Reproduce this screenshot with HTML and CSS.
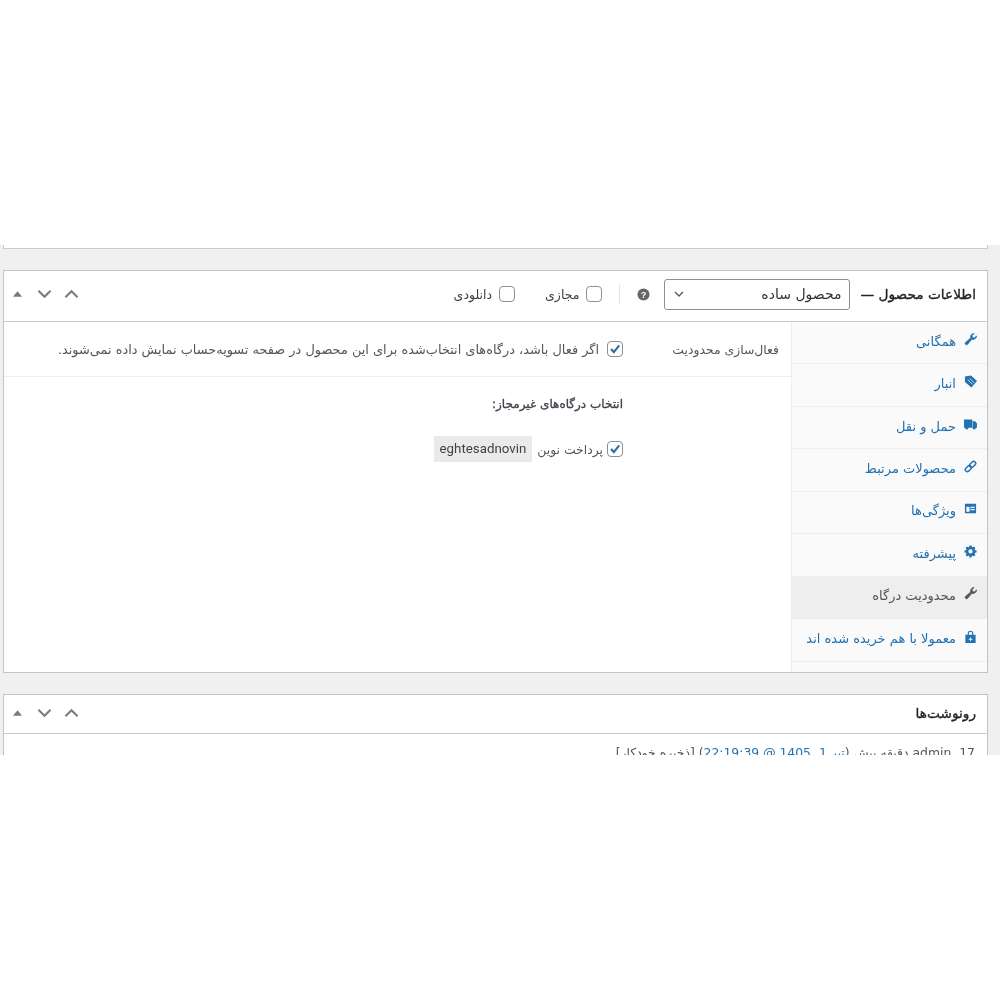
FILE: index.html
```html
<!DOCTYPE html>
<html lang="fa" dir="rtl">
<head>
<meta charset="utf-8">
<title>اطلاعات محصول</title>
<link rel="stylesheet" href="styles.css">
</head>
<body>
<main class="screen">
  <div class="prev-box"></div>

  <section class="postbox product">
    <header class="box-head tall">
      <h2 class="box-title">اطلاعات محصول —</h2>
      <div class="fake-select">
        <span>محصول ساده</span>
        <svg class="caret" viewBox="0 0 10 6"><path d="M1 1l4 4 4-4" fill="none" stroke="#50575e" stroke-width="1.3"/></svg>
      </div>
      <svg class="help" viewBox="0 0 14 14"><circle cx="7" cy="7" r="6.5" fill="#666"/><text x="7" y="10.6" text-anchor="middle" class="help-q">?</text></svg>
      <span class="sep"></span>
      <label class="type-check first"><span class="cb"></span>مجازی</label>
      <label class="type-check"><span class="cb"></span>دانلودی</label>
      <div class="handles">
        <svg viewBox="0 0 16 10"><path d="M1.5 8.5L8 2l6.500 6.500" fill="none" stroke="#787c82" stroke-width="2.200"/></svg>
        <svg viewBox="0 0 16 10"><path d="M1.500 1.500L8 8l6.500-6.500" fill="none" stroke="#787c82" stroke-width="2.200"/></svg>
        <svg class="small" viewBox="0 0 12 8"><path d="M6 1l5 6H1z" fill="#787c82"/></svg>
      </div>
    </header>
    <div class="product-body">
      <nav class="tabs">
        <a class="tab"><svg viewBox="0 0 14 14"><path class="solid" d="M13.500 3.200a3.700 3.700 0 0 1-5 3.500L3.700 12.300a1.500 1.500 0 0 1-2.200-2L7.200 5.400A3.700 3.700 0 0 1 10.800.6L8.700 2.800l.4 2.100 2.100.4z"/></svg>همگانی</a>
        <a class="tab"><svg viewBox="0 0 14 14"><path d="M7.500 0.500L14 6.500 8 13.500 1 7.500V1.500z"/><path d="M4 5l5 5M6 3.500l5 5" stroke="#fafafa" stroke-width=".8"/></svg>انبار</a>
        <a class="tab"><svg viewBox="0 0 14 14"><path d="M0 1.500h9v9H0zM9.500 3.500h2.600L14 6v4.500H9.500z"/><circle cx="3" cy="10.500" r="1.800"/><circle cx="11" cy="10.500" r="1.800"/></svg>حمل و نقل</a>
        <a class="tab"><svg viewBox="0 0 14 14"><g fill="none" stroke="#2271b1" stroke-width="1.600" transform="rotate(-45 7 7)"><rect x="0" y="4.800" width="7.500" height="4.400" rx="2.200"/><rect x="6.500" y="4.800" width="7.500" height="4.400" rx="2.200"/></g></svg>محصولات مرتبط</a>
        <a class="tab"><svg viewBox="0 0 14 14"><path fill-rule="evenodd" d="M1 2h12v10H1zM2.500 5v5.500H6V5zM7 5v1.500h4.500V5zM7 7.500V9h4.500V7.500z"/></svg>ویژگی‌ها</a>
        <a class="tab"><svg viewBox="0 0 14 14"><path fill-rule="evenodd" d="M5.800 1h2.400l.3 1.700 1.100.5L11 2.200 12.700 4l-1 1.400.5 1.100 1.800.3v2.400l-1.800.3-.5 1.100 1 1.400L11 13.800l-1.400-1-1.100.5-.3 1.700H5.800l-.3-1.700-1.100-.5-1.400 1L1.300 12l1-1.400-.5-1.100L0 9.200V6.800l1.800-.3.500-1.100-1-1.400L3 2.200l1.400 1 1.100-.5zM7 5.500a2.500 2.500 0 1 0 0 5 2.500 2.500 0 0 0 0-5z" transform="translate(0.500 -0.500) scale(.93)"/></svg>پیشرفته</a>
        <a class="tab active"><svg viewBox="0 0 14 14"><path class="solid" d="M13.500 3.200a3.700 3.700 0 0 1-5 3.500L3.700 12.300a1.500 1.500 0 0 1-2.200-2L7.200 5.400A3.700 3.700 0 0 1 10.800.6L8.700 2.800l.4 2.100 2.100.4z"/></svg>محدودیت درگاه</a>
        <a class="tab"><svg viewBox="0 0 14 14"><path fill-rule="evenodd" d="M1.500 5H4V3.800a3 3 0 0 1 6 0V5h2.500v9h-11zM5.200 5h3.600V3.800a1.800 1.800 0 0 0-3.600 0z"/><path d="M7 8v4M5 10h4" stroke="#fafafa" stroke-width="1"/></svg>معمولا با هم خریده شده اند</a>
      </nav>
      <div class="panel">
        <div class="opt-row">
          <span class="opt-label">فعال‌سازی محدودیت</span>
          <span class="cb checked"><svg viewBox="0 0 16 16"><path d="M3.500 8l3.200 3.500L12.800 3.800" fill="none" stroke="#2f6f9f" stroke-width="2.400"/></svg></span>
          <span class="opt-desc">اگر فعال باشد، درگاه‌های انتخاب‌شده برای این محصول در صفحه تسویه‌حساب نمایش داده نمی‌شوند.</span>
        </div>
        <div class="gateways">
          <h3 class="gw-title">انتخاب درگاه‌های غیرمجاز:</h3>
          <div class="gw-row">
            <span class="cb checked"><svg viewBox="0 0 16 16"><path d="M3.500 8l3.200 3.500L12.800 3.800" fill="none" stroke="#2f6f9f" stroke-width="2.400"/></svg></span>
            <span class="gw-name">پرداخت نوین</span>
            <code class="gw-code">eghtesadnovin</code>
          </div>
        </div>
      </div>
    </div>
  </section>

  <section class="postbox revisions">
    <header class="box-head short">
      <h2 class="box-title">رونوشت‌ها</h2>
      <div class="handles">
        <svg viewBox="0 0 16 10"><path d="M1.500 8.500L8 2l6.500 6.500" fill="none" stroke="#787c82" stroke-width="2.200"/></svg>
        <svg viewBox="0 0 16 10"><path d="M1.500 1.500L8 8l6.500-6.500" fill="none" stroke="#787c82" stroke-width="2.200"/></svg>
        <svg class="small" viewBox="0 0 12 8"><path d="M6 1l5 6H1z" fill="#787c82"/></svg>
      </div>
    </header>
    <p class="rev-line">17 ,admin دقیقه پیش (<a>تیر 1, 1405 @ 22:19:39</a>) [ذخیره خودکار]</p>
  </section>
</main>
</body>
</html>
```
FILE: styles.css
```css
* { box-sizing: border-box; }
html, body { margin: 0; padding: 0; background: #fff; }
body { font-family: "DejaVu Sans", "Noto Sans", sans-serif; font-size: 12px; color: #50575e; }

.screen {
  margin-top: 245px;
  height: 510px;
  overflow: hidden;
  background: #f0f0f1;
  padding: 0 12px 0 3px;
  filter: blur(0.3px);
}
.prev-box {
  height: 4px;
  background: #fff;
  border: 1px solid #c9cbce;
  border-top: 0;
}
.postbox {
  background: #fff;
  border: 1px solid #c3c4c7;
}
.product { margin-top: 21px; height: 403px; display: flex; flex-direction: column; }
.revisions { margin-top: 21px; }

.box-head {
  display: flex;
  align-items: center;
  border-bottom: 1px solid #c9cbce;
  padding: 0 11px 4px 8px;
}
.box-head.tall { height: 51px; flex: none; }
.box-head.short { height: 39px; padding-bottom: 3px; }
.box-title {
  margin: 0;
  font-size: 13.700px;
  font-weight: 400;
  -webkit-text-stroke: 0.35px #1d2327;
  color: #1d2327;
  white-space: nowrap;
}

.fake-select {
  width: 186px;
  height: 31px;
  margin-right: 10px;
  padding: 0 8px 0 9px;
  border: 1px solid #8c8f94;
  border-radius: 3px;
  display: flex;
  align-items: center;
  justify-content: space-between;
  font-size: 14px;
  color: #2c3338;
}
.caret { width: 10px; height: 6px; }
.help { width: 13px; height: 13px; margin-right: 14px; }
.help-q { font: bold 10px "Liberation Sans", sans-serif; fill: #fff; }
.sep { width: 1px; height: 20px; background: #e2e4e7; margin-right: 17px; }
.type-check { display: flex; align-items: center; gap: 7px; color: #3c434a; font-size: 12.500px; margin-right: 30px; }
.type-check.first { margin-right: 17px; }

.cb {
  display: block;
  flex: none;
  width: 16px;
  height: 16px;
  border: 1px solid #8c8f94;
  border-radius: 4px;
  background: #fff;
}
.cb svg { display: block; width: 14px; height: 14px; }

.handles { margin-right: auto; display: flex; align-items: center; gap: 12px; }
.handles svg { width: 15px; height: 10px; }
.handles svg.small { width: 11px; height: 8px; margin-right: 2px; }

.product-body { flex: 1; display: flex; min-height: 0; }
.tabs {
  flex: none;
  width: 196px;
  background: #fafafa;
  border-left: 1px solid #eee;
  display: flex;
  flex-direction: column;
}
.tab {
  height: 42.450px;
  flex: none;
  display: flex;
  align-items: center;
  gap: 8px;
  padding: 0 10px 3px 0;
  color: #2271b1;
  font-size: 13px;
  border-bottom: 1px solid #eee;
  white-space: nowrap;
}
.tab svg { width: 13px; height: 13px; flex: none; fill: #2271b1; margin-top: -4px; }
.tab .solid { stroke: #2271b1; stroke-width: 0.8; }
.tab.active { background: #eee; color: #555; border-bottom-color: #eee; }
.tab.active svg { fill: #555; }
.tab.active .solid { stroke: #555; }

.panel { flex: 1; min-width: 0; }
.opt-row {
  height: 55px;
  display: flex;
  align-items: center;
  border-bottom: 1px solid #eee;
  padding-right: 12px;
  white-space: nowrap;
}
.opt-label { width: 156px; flex: none; font-size: 12.400px; color: #50575e; }
.opt-desc { margin-right: 8px; font-size: 12.900px; color: #50575e; }
.gateways { padding: 18px 168px 0 0; }
.gw-title { margin: 0; font-size: 12px; font-weight: 400; -webkit-text-stroke: 0.3px #3c434a; color: #3c434a; line-height: 18px; }
.gw-row { display: flex; align-items: center; margin-top: 23px; height: 26px; }
.gw-name { margin-right: 4px; font-size: 12.400px; }
.gw-code {
  margin-right: 5px;
  height: 26px;
  padding: 0 6px;
  background: #eaeaea;
  color: #3c434a;
  font: 13.300px/26px "Roboto", "Liberation Sans", sans-serif;
  direction: ltr;
}
.rev-line { margin: 10px 12px 0 0; font-size: 12.400px; line-height: 18px; color: #50575e; white-space: nowrap; }
.rev-line a { color: #2271b1; }
```
